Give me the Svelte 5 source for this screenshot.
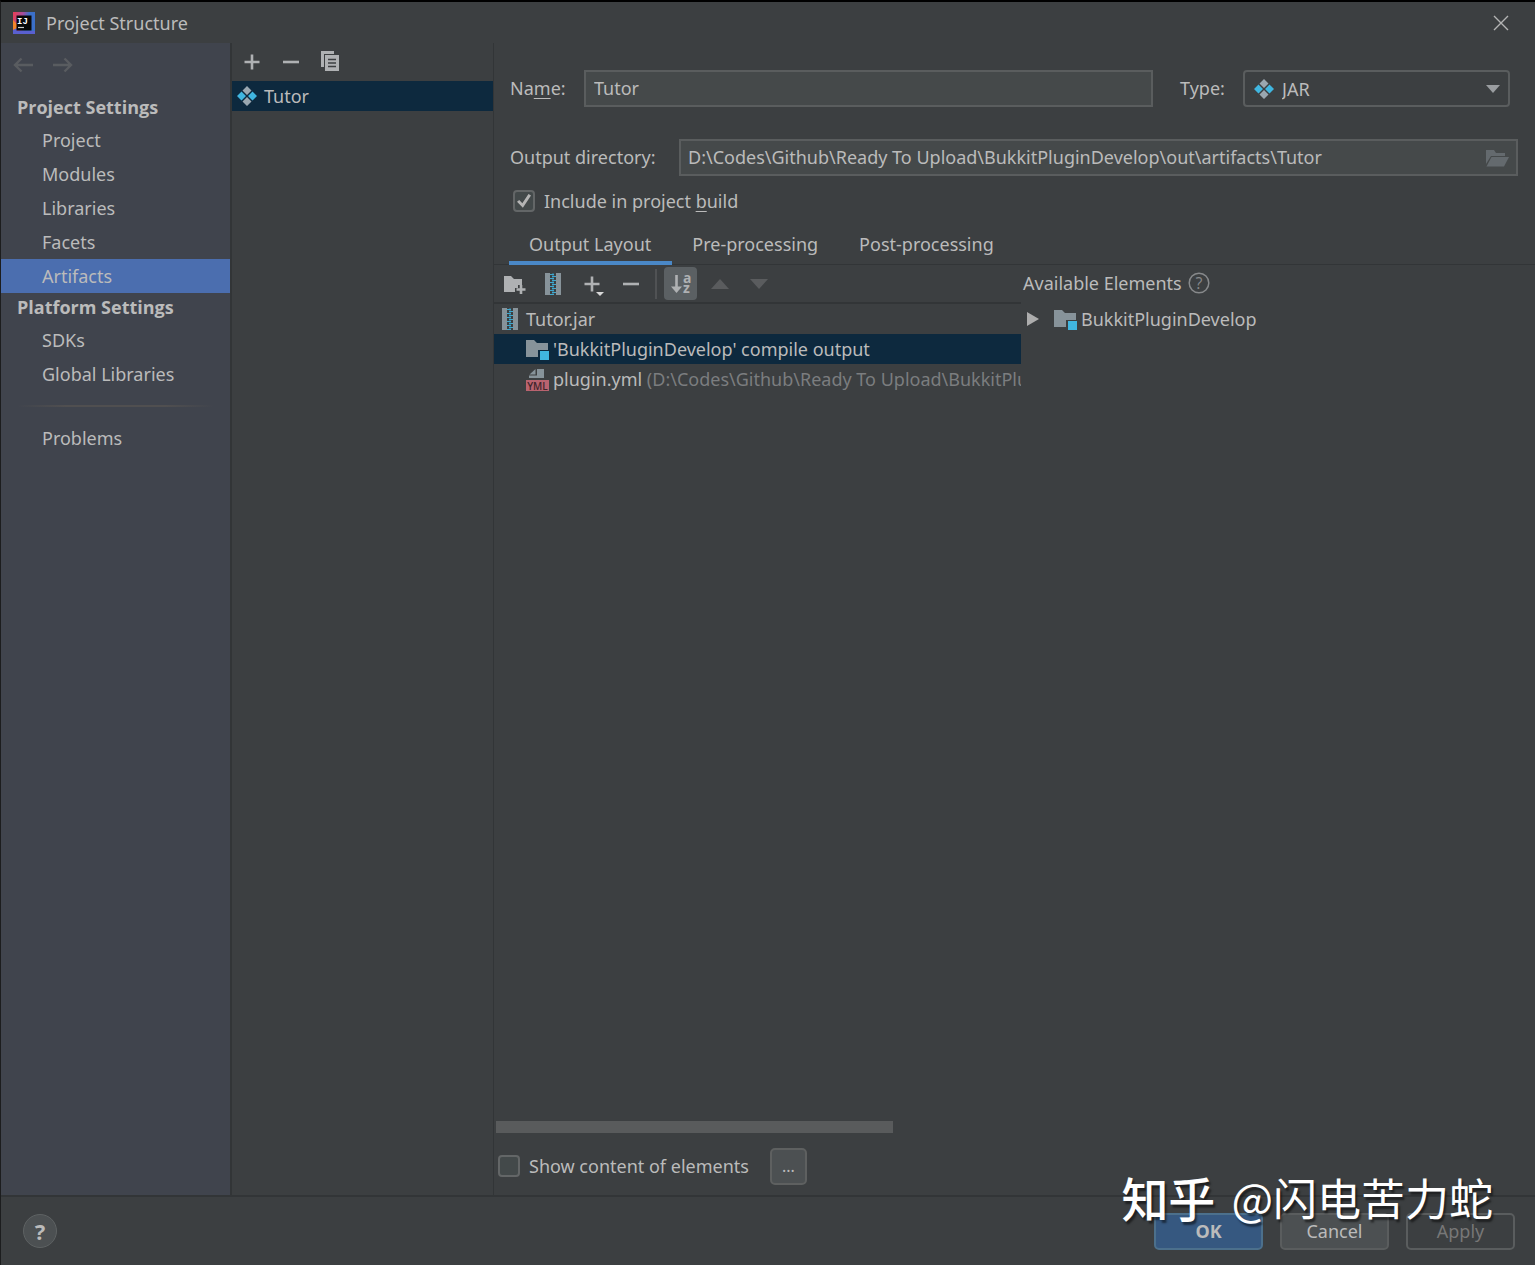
<script>
	const settingsGroups = [
		{ title: 'Project Settings', items: ['Project', 'Modules', 'Libraries', 'Facets', 'Artifacts'] },
		{ title: 'Platform Settings', items: ['SDKs', 'Global Libraries'] }
	];
	const tabs = ['Output Layout', 'Pre-processing', 'Post-processing'];

	let section = $state('Artifacts');
	let activeTab = $state('Output Layout');
	let artifactName = $state('Tutor');
	let artifactType = $state('JAR');
	let outputDir = $state('D:\\Codes\\Github\\Ready To Upload\\BukkitPluginDevelop\\out\\artifacts\\Tutor');
	let includeInBuild = $state(true);
	let showContent = $state(false);
	let sorted = $state(true);
	let selectedNode = $state('output');
</script>

<svelte:head>
	<title>Project Structure</title>
</svelte:head>

{#snippet artifactIcon()}
	<svg class="icon" viewBox="0 0 22 22" width="22" height="22" aria-hidden="true">
		<path d="M11 1l4.500 4.500L11 10 6.500 5.500zM11 12l4.500 4.500L11 21l-4.500-4.500z" fill="#9aa7b0" />
		<path d="M5.500 6.500L10 11l-4.500 4.500L1 11zM16.500 6.500L21 11l-4.500 4.500L12 11z" fill="#40b6e0" />
	</svg>
{/snippet}

{#snippet archiveIcon()}
	<svg class="icon" viewBox="0 0 16 22" width="16" height="22" aria-hidden="true">
		<path d="M0 0h5v22H0zM11 0h5v22h-5z" fill="#87939a" />
		<path
			d="M5 1.500h4M7 3.500h4M5 5.500h4M7 7.500h4M5 9.500h4M7 11.500h4M5 13.500h4M7 15.500h4M5 17.500h4M7 19.500h4M5 21.500h4"
			stroke="#40a9cf"
			stroke-width="1"
		/>
		<path d="M8 0v22" stroke="#40a9cf" stroke-width="1.500" opacity="0.5" />
	</svg>
{/snippet}

{#snippet moduleIcon()}
	<svg class="icon" viewBox="0 0 24 22" width="24" height="22" aria-hidden="true">
		<path d="M1 2h8l3 3h11v7H13v7H1z" fill="#87939a" />
		<path d="M15 13h9v9h-9z" fill="#40b6e0" />
	</svg>
{/snippet}

{#snippet plusIcon()}
	<svg class="icon" viewBox="0 0 22 22" width="22" height="22" aria-hidden="true">
		<path d="M11 3.500v15M3.500 11h15" stroke="#afb1b3" stroke-width="2.600" />
	</svg>
{/snippet}

{#snippet minusIcon()}
	<svg class="icon" viewBox="0 0 22 22" width="22" height="22" aria-hidden="true">
		<path d="M3 11h16" stroke="#afb1b3" stroke-width="2.600" />
	</svg>
{/snippet}

<div class="dialog">
	<header class="titlebar">
		<svg viewBox="0 0 22 22" width="22" height="22" aria-hidden="true">
			<defs>
				<linearGradient id="frame" x1="0" y1="0" x2="1" y2="0.3">
					<stop offset="0.1" stop-color="#e0405f" />
					<stop offset="0.45" stop-color="#a04fa0" />
					<stop offset="0.7" stop-color="#3b6fc8" />
				</linearGradient>
			</defs>
			<path d="M0 0h22v22H0z" fill="url(#frame)" />
			<path d="M0 8l4 4v5l-4 2z" fill="#f58529" />
			<path d="M0 18l4-2v3h18v3H0z" fill="#5a60d0" />
			<path d="M3.500 3.500h15v15h-15z" fill="#080808" />
			<text class="logo" x="4" y="12" font-size="9" font-weight="700">IJ</text>
			<path d="M5 15.500h6" stroke="#ccc" stroke-width="1.200" />
		</svg>
		<h1>Project Structure</h1>
		<button class="close" aria-label="Close">
			<svg viewBox="0 0 16 16" width="16" height="16"><path d="M1 1l14 14M15 1L1 15" stroke="#b4b4b4" stroke-width="1.400" /></svg>
		</button>
	</header>

	<div class="body">
		<nav class="sidebar">
			<div class="history">
				<button aria-label="Back" disabled>
					<svg viewBox="0 0 20 16" width="20" height="16"><path d="M20 8H2M8.500 1.500L2 8l6.500 6.500" /></svg>
				</button>
				<button aria-label="Forward" disabled>
					<svg viewBox="0 0 20 16" width="20" height="16"><path d="M0 8h18M11.500 1.500L18 8l-6.500 6.500" /></svg>
				</button>
			</div>
			{#each settingsGroups as group}
				<h2>{group.title}</h2>
				{#each group.items as item}
					<button class="nav-item" class:selected={section === item} onclick={() => (section = item)}>{item}</button>
				{/each}
			{/each}
			<div class="separator"></div>
			<button class="nav-item" class:selected={section === 'Problems'} onclick={() => (section = 'Problems')}>Problems</button>
		</nav>

		<section class="artifacts">
			<div class="list-toolbar">
				<button aria-label="Add">{@render plusIcon()}</button>
				<button aria-label="Remove">{@render minusIcon()}</button>
				<button aria-label="Copy">
					<svg class="icon" viewBox="0 0 22 22" width="22" height="22">
						<path d="M2 0h13v3H5v13H2z" fill="#afb1b3" />
						<path d="M6 4h14v16H6z" fill="#afb1b3" />
						<path d="M9 8.500h8M9 12h8M9 15.500h8" stroke="#3c3f41" stroke-width="1.500" />
					</svg>
				</button>
			</div>
			<button class="row artifact selected">
				{@render artifactIcon()}
				<span>Tutor</span>
			</button>
		</section>

		<main class="editor">
			<div class="form-row name-row">
				<label for="name">Na<u>m</u>e:</label>
				<input id="name" type="text" bind:value={artifactName} />
				<label for="type" class="type-label">Type:</label>
				<div class="combo">
					<select id="type" bind:value={artifactType}>
						<option>JAR</option>
					</select>
					{@render artifactIcon()}
					<svg class="arrow" viewBox="0 0 14 8" width="14" height="8" aria-hidden="true"><path d="M0 0h14L7 8z" fill="#9a9da0" /></svg>
				</div>
			</div>

			<div class="form-row dir-row">
				<label for="dir">Output directory:</label>
				<div class="path-field">
					<input id="dir" type="text" bind:value={outputDir} />
					<button aria-label="Browse">
						<svg class="icon" viewBox="0 0 24 18" width="24" height="18">
							<path d="M1 1h8l2 3h9v3H6L1 15z" fill="#646a6e" />
							<path d="M6.500 8H24l-5 9.500H1.500z" fill="#646a6e" />
						</svg>
					</button>
				</div>
			</div>

			<div class="check-row">
				<input id="include" type="checkbox" bind:checked={includeInBuild} />
				<label for="include">Include in project <u>b</u>uild</label>
			</div>

			<div class="tabs" role="tablist">
				{#each tabs as tab}
					<button role="tab" aria-selected={activeTab === tab} class:active={activeTab === tab} onclick={() => (activeTab = tab)}>{tab}</button>
				{/each}
			</div>

			<div class="panes">
				<div class="layout-pane">
					<div class="layout-toolbar">
						<button aria-label="Create directory">
							<svg class="icon" viewBox="0 0 24 22" width="24" height="22">
								<path d="M2 3h7l3 3h8v6h-4v3h-3v4H2z" fill="#afb1b3" />
								<path d="M19 12v9M14.500 16.500h9" stroke="#afb1b3" stroke-width="2.600" />
							</svg>
						</button>
						<button aria-label="Create archive">{@render archiveIcon()}</button>
						<button aria-label="Add copy of">
							<svg class="icon" viewBox="0 0 24 24" width="24" height="24">
								<path d="M12 4.500v15M4.500 12h15" stroke="#afb1b3" stroke-width="2.600" />
								<path d="M16 20h8l-4 4z" fill="#d8d8d8" />
							</svg>
						</button>
						<button aria-label="Remove element">{@render minusIcon()}</button>
						<span class="divider"></span>
						<button class="sort" class:pressed={sorted} aria-label="Sort by name" aria-pressed={sorted} onclick={() => (sorted = !sorted)}>
							<svg viewBox="0 0 33 33" width="33" height="33">
								<path d="M12.500 8v13" stroke="#afb1b3" stroke-width="2.600" />
								<path d="M7 19.500h11L12.500 26z" fill="#afb1b3" />
								<text x="19" y="15.500" font-size="14" font-weight="700">a</text>
								<text x="19" y="26" font-size="14" font-weight="700">z</text>
							</svg>
						</button>
						<button aria-label="Move up" disabled>
							<svg class="icon" viewBox="0 0 18 10" width="18" height="10"><path d="M0 10h18L9 0z" fill="#5a5c5e" /></svg>
						</button>
						<button aria-label="Move down" disabled>
							<svg class="icon" viewBox="0 0 18 10" width="18" height="10"><path d="M0 0h18L9 10z" fill="#5a5c5e" /></svg>
						</button>
					</div>
					<div class="tree">
						<button class="row root" class:selected={selectedNode === 'root'} onclick={() => (selectedNode = 'root')}>
							{@render archiveIcon()}
							<span>Tutor.jar</span>
						</button>
						<button class="row child" class:selected={selectedNode === 'output'} onclick={() => (selectedNode = 'output')}>
							{@render moduleIcon()}
							<span>'BukkitPluginDevelop' compile output</span>
						</button>
						<button class="row child" class:selected={selectedNode === 'yml'} onclick={() => (selectedNode = 'yml')}>
							<svg class="icon" viewBox="0 0 24 24" width="24" height="24" aria-hidden="true">
								<path d="M12 2h7v9H4V8.500h8z" fill="#87939a" />
								<path d="M10.500 2v5.500H4.500z" fill="#87939a" />
								<path d="M1 13h23v11H1z" fill="#b9636f" />
								<text x="12.500" y="22.500" text-anchor="middle" font-size="10" font-weight="600" fill="#40262b">YML</text>
							</svg>
							<span>plugin.yml <em>(D:\Codes\Github\Ready To Upload\BukkitPluginDevelop\src)</em></span>
						</button>
					</div>
					<div class="scrollbar"><div class="thumb"></div></div>
				</div>

				<div class="available">
					<div class="available-head">
						<span>Available Elements</span>
						<svg viewBox="0 0 22 22" width="22" height="22" aria-hidden="true">
							<circle cx="11" cy="11" r="9.800" fill="none" stroke="#87898b" stroke-width="1.500" />
							<text x="11" y="16.500" text-anchor="middle" font-size="16" fill="#87898b">?</text>
						</svg>
					</div>
					<button class="row available-node">
						<svg class="icon" viewBox="0 0 12 14" width="12" height="14" aria-hidden="true"><path d="M0 0l12 7L0 14z" fill="#adadad" /></svg>
						{@render moduleIcon()}
						<span>BukkitPluginDevelop</span>
					</button>
				</div>
			</div>

			<div class="content-row">
				<input id="content" type="checkbox" bind:checked={showContent} />
				<label for="content">Show content of elements</label>
				<button class="more">...</button>
			</div>
		</main>
	</div>

	<footer>
		<button class="help" aria-label="Help">?</button>
		<button class="action primary">OK</button>
		<button class="action">Cancel</button>
		<button class="action" disabled>Apply</button>
	</footer>

	<div class="watermark"><strong>知乎</strong> <span>@闪电苦力蛇</span></div>
</div>

<style>
	:global(body) {
		margin: 0;
		background: #3c3f41;
	}

	.dialog {
		position: relative;
		display: flex;
		flex-direction: column;
		min-height: 100vh;
		box-sizing: border-box;
		border-top: 2px solid #000;
		border-left: 1px solid #1c1d1e;
		background: #3c3f41;
		color: #bbbbbb;
		font-family: 'Noto Sans', 'Noto Sans CJK SC', sans-serif;
		font-size: 18px;
		line-height: 24px;
	}

	button,
	input,
	select {
		font: inherit;
		color: inherit;
		box-sizing: border-box;
	}

	button {
		padding: 0;
		border: none;
		background: none;
	}

	h1,
	h2 {
		margin: 0;
		font-size: 18px;
		line-height: 24px;
	}

	svg {
		display: block;
		flex: none;
	}

	svg text {
		font-family: 'Open Sans', sans-serif;
	}

	svg .logo {
		font-family: 'Liberation Mono', monospace;
		fill: #fff;
	}

	.titlebar {
		display: flex;
		align-items: center;
		gap: 11px;
		height: 41px;
		padding: 0 26px 0 12px;
	}

	h1 {
		flex: 1;
		font-weight: 400;
	}

	.body {
		flex: 1;
		display: flex;
	}

	.sidebar {
		display: flex;
		flex-direction: column;
		flex: 0 0 229px;
		background: #40444d;
		border-right: 2px solid #323537;
	}

	.history {
		display: flex;
		align-items: center;
		gap: 20px;
		height: 44px;
		padding: 0 12px 6px;
	}

	.history path {
		fill: none;
		stroke: #595c60;
		stroke-width: 2.400;
	}

	h2 {
		padding: 2px 16px 4px;
		font-family: 'Open Sans', sans-serif;
		font-weight: 700;
	}

	.nav-item {
		height: 34px;
		padding-left: 41px;
		text-align: left;
	}

	.nav-item.selected {
		background: #4b6eaf;
	}

	.separator {
		height: 2px;
		margin: 14px 16px;
		background: linear-gradient(90deg, transparent, #504f50 25%, #504f50 75%, transparent);
	}

	.artifacts {
		flex: 0 0 261px;
		border-right: 1px solid #323537;
	}

	.list-toolbar {
		display: flex;
		align-items: center;
		gap: 17px;
		height: 38px;
		padding-left: 9px;
	}

	.row {
		display: flex;
		align-items: center;
		width: 100%;
		height: 30px;
		gap: 4px;
		text-align: left;
		white-space: nowrap;
	}

	.row.selected {
		background: #0d293e;
	}

	.row.artifact {
		padding-left: 4px;
		gap: 6px;
	}

	.editor {
		flex: 1;
		min-width: 0;
		display: flex;
		flex-direction: column;
	}

	.form-row {
		display: flex;
		align-items: center;
		padding-left: 16px;
	}

	.form-row label {
		padding-bottom: 2px;
	}

	.name-row {
		padding-top: 27px;
		padding-right: 25px;
	}

	.name-row label {
		width: 74px;
	}

	.name-row .type-label {
		width: 63px;
		margin-left: 27px;
	}

	.dir-row {
		padding-top: 32px;
		padding-right: 17px;
	}

	.dir-row label {
		width: 169px;
	}

	u {
		text-underline-offset: 3px;
	}

	input[type='text'] {
		flex: 1;
		min-width: 0;
		height: 37px;
		padding: 0 8px 2px;
		border: 2px solid #5a5d5e;
		background: #45494a;
		outline: none;
	}

	.combo {
		display: grid;
		grid-template-columns: 267px;
		align-items: center;
	}

	.combo > :global(*) {
		grid-area: 1 / 1;
	}

	.combo > :global(svg) {
		margin-left: 10px;
		pointer-events: none;
	}

	.combo > .arrow {
		justify-self: end;
		margin-right: 10px;
	}

	select {
		appearance: none;
		height: 37px;
		padding: 0 37px;
		border: 2px solid #5a5d5e;
		border-radius: 4px;
		background: #3c3f41;
	}

	.path-field {
		flex: 1;
		display: flex;
		align-items: center;
		border: 2px solid #5a5d5e;
		background: #45494a;
	}

	.path-field input[type='text'] {
		height: 33px;
		padding-left: 7px;
		border: none;
	}

	.path-field button {
		padding: 0 7px;
	}

	.check-row {
		display: flex;
		align-items: center;
		gap: 9px;
		height: 24px;
		padding: 13px 0 0 19px;
	}

	input[type='checkbox'] {
		appearance: none;
		display: grid;
		place-content: center;
		width: 22px;
		height: 22px;
		margin: 0;
		border: 2px solid #636667;
		border-radius: 4px;
		background: #43494a;
	}

	input[type='checkbox']:checked::after {
		content: '';
		width: 14px;
		height: 14px;
		background: #b4b4b4;
		clip-path: polygon(0 55%, 16% 42%, 38% 66%, 82% 0, 100% 10%, 42% 98%);
	}

	.tabs {
		display: flex;
		height: 51px;
		padding-left: 15px;
		border-bottom: 1px solid #323537;
	}

	.tabs button {
		height: 52px;
		padding: 13px 21px 0 20px;
		border-bottom: 4px solid transparent;
	}

	.tabs button.active {
		border-bottom-color: #4a88c7;
	}

	.panes {
		flex: 1;
		display: flex;
	}

	.layout-pane {
		display: flex;
		flex-direction: column;
		flex: 0 0 527px;
		min-width: 0;
		overflow: hidden;
	}

	.layout-toolbar {
		display: flex;
		align-items: center;
		gap: 15px;
		height: 37px;
		padding-left: 8px;
		border-bottom: 2px solid #323537;
	}

	.layout-toolbar button {
		display: flex;
		justify-content: center;
		width: 24px;
	}

	.divider {
		width: 2px;
		height: 30px;
		margin: 0 -8px 0 -3px;
		background: #505254;
	}

	.layout-toolbar .sort {
		width: 33px;
		margin-right: -4px;
		border-radius: 4px;
	}

	.sort.pressed {
		background: #5b6063;
	}

	.sort text {
		fill: #afb1b3;
	}

	.tree {
		flex: 1;
	}

	.row.root {
		padding-left: 8px;
		gap: 8px;
	}

	.row.child {
		padding-left: 31px;
	}

	em {
		font-style: normal;
		color: #7b7d7f;
	}

	.scrollbar {
		padding: 0 2px;
	}

	.thumb {
		width: 76%;
		height: 12px;
		background: #595b5c;
	}

	.available {
		flex: 1;
		min-width: 0;
	}

	.available-head {
		display: flex;
		align-items: center;
		gap: 6px;
		height: 36px;
		padding: 0 0 3px 2px;
	}

	.available-node {
		padding-left: 6px;
	}

	.available-node > :global(.icon:first-child) {
		margin-right: 10px;
	}

	.content-row {
		display: flex;
		align-items: center;
		gap: 9px;
		height: 62px;
		padding: 4px 0 0 4px;
		box-sizing: border-box;
	}

	.more {
		width: 37px;
		height: 37px;
		margin-left: 12px;
		border: 2px solid #5e6060;
		border-radius: 5px;
		background: #4c5052;
		font-size: 16px;
	}

	footer {
		display: flex;
		align-items: center;
		gap: 17px;
		height: 70px;
		padding: 0 20px 0 22px;
		box-sizing: border-box;
		border-top: 2px solid #323537;
	}

	.help {
		width: 34px;
		height: 34px;
		margin-right: auto;
		border: 1px solid #5e6263;
		border-radius: 50%;
		background: #4c5052;
		font-size: 22px;
		font-weight: 700;
		line-height: 30px;
	}

	.action {
		width: 109px;
		height: 37px;
		border: 2px solid #5a5d5e;
		border-radius: 5px;
		background: #4c5052;
	}

	.action.primary {
		border-color: #4c708c;
		background: #365880;
		font-weight: 700;
	}

	.action:disabled {
		background: none;
		color: #777777;
	}

	.watermark {
		position: absolute;
		right: 42px;
		bottom: 38px;
		display: flex;
		align-items: center;
		gap: 16px;
		color: #fff;
		font-family: 'Noto Sans CJK SC', sans-serif;
		font-size: 44px;
		line-height: 60px;
		text-shadow: 2px 3px 2px rgba(0, 0, 0, 0.5);
		pointer-events: none;
	}

	.watermark strong {
		font-size: 47px;
		font-weight: 500;
	}
</style>
